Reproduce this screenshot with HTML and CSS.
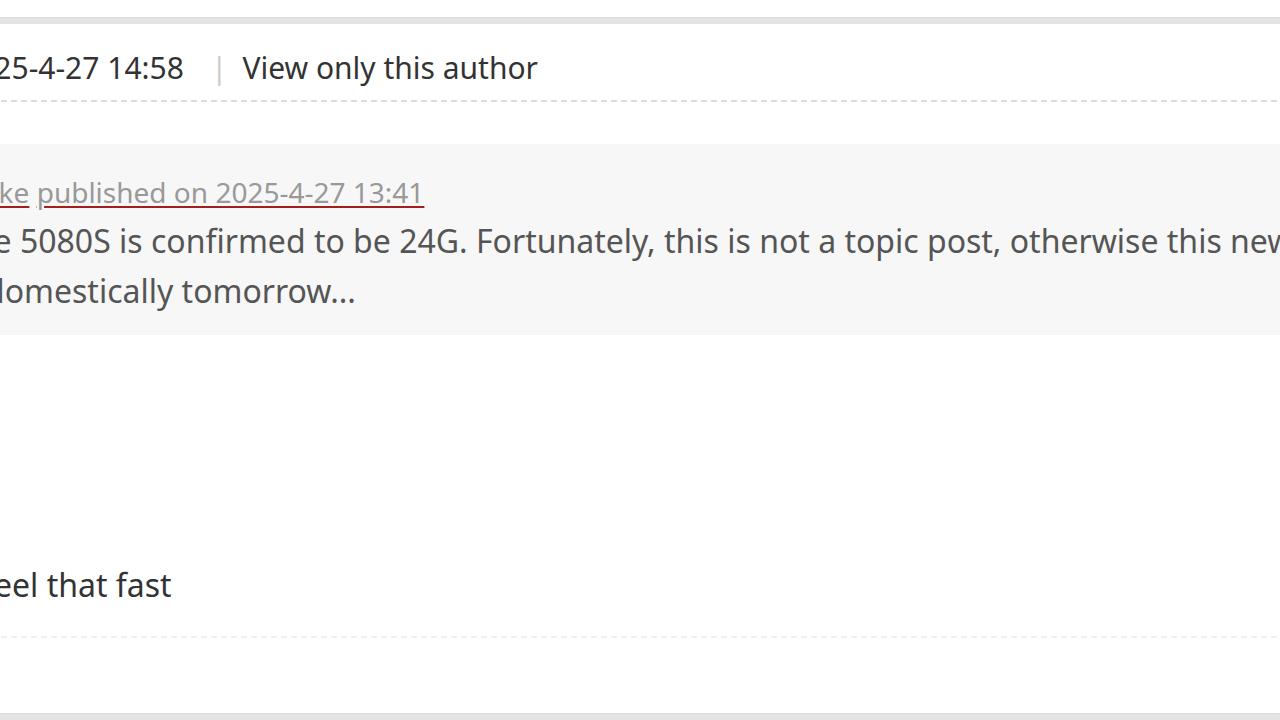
FILE: index.html
```html
<!DOCTYPE html>
<html lang="en">
<head>
  <meta charset="UTF-8" />
  <title>Reply</title>
  <link rel="stylesheet" href="styles.css">
</head>
<body>

  <div class="bar"></div>

  <div class="post">
    <div class="post-head">
      <span class="post-time">2025-4-27 14:58</span>
      <span class="sep">|</span>
      <a class="only-author" href="#">View only this author</a>
    </div>
    <div class="dash"></div>

    <div class="post-body">
      <blockquote class="quote">
        <div class="quote-head">
          <a class="quote-user" href="#">Mike</a> <span class="quote-time">published on 2025-4-27 13:41</span>
        </div>
        <div class="quote-text">
          <span class="first-line">The 5080S is confirmed to be 24G. Fortunately, this is not a topic post, otherwise this news would be everywhere</span><br>
          domestically tomorrow...
        </div>
      </blockquote>

      <p class="reply">feel that fast</p>
    </div>
    <div class="dash dash-light"></div>
  </div>

  <div class="bar bar-bottom"></div>

</body>
</html>
```

FILE: styles.css
```css
body {
  margin: 0;
  overflow: hidden;
  background-color: #fff;
  font-family: "Noto Sans", "Open Sans", sans-serif;
  color: #333;
}

.bar {
  height: 6px;
  margin-top: 17px;
  background-color: #e4e4e4;
  border-top: 1px solid #dcdcdc;
}

.bar-bottom {
  margin-top: 75px;
}

.post {
  margin-left: -9px;
  white-space: nowrap;
}

.post-head {
  height: 76px;
  box-sizing: border-box;
  padding-top: 12px;
  display: flex;
  align-items: center;
  font-size: 30px;
  line-height: 64px;
}

.post-time {
  margin-left: -31px;
}

.sep {
  color: #ccc;
  margin: 0 15px 0 27px;
}

.only-author {
  color: #333;
  text-decoration: none;
}

.dash {
  height: 2px;
  background-image: repeating-linear-gradient(to right, #dcdcdc 0 6px, transparent 6px 10px);
}

.dash-light {
  background-image: repeating-linear-gradient(to right, #f0f0f0 0 6px, transparent 6px 10px);
}

.post-body {
  padding-top: 42px;
  padding-bottom: 31px;
}

.quote {
  margin: 0;
  height: 191px;
  padding-top: 30px;
  box-sizing: border-box;
  background-color: #f7f7f7;
}

.quote-head {
  font-size: 28px;
  line-height: 36px;
  color: #999;
}

.quote-user,
.quote-time {
  color: #999;
  text-decoration: underline;
  text-decoration-color: #a51d1d;
  text-decoration-thickness: 2px;
  text-underline-offset: 3px;
}

.quote-user {
  margin-left: -25px;
}

.quote-text {
  margin-top: 6px;
  margin-left: -6px;
  font-size: 32px;
  line-height: 50px;
  color: #555;
}

.first-line {
  margin-left: -29px;
}

.reply {
  margin: 230px 0 0 -8px;
  font-size: 32px;
  line-height: 40px;
  color: #333;
}
```
